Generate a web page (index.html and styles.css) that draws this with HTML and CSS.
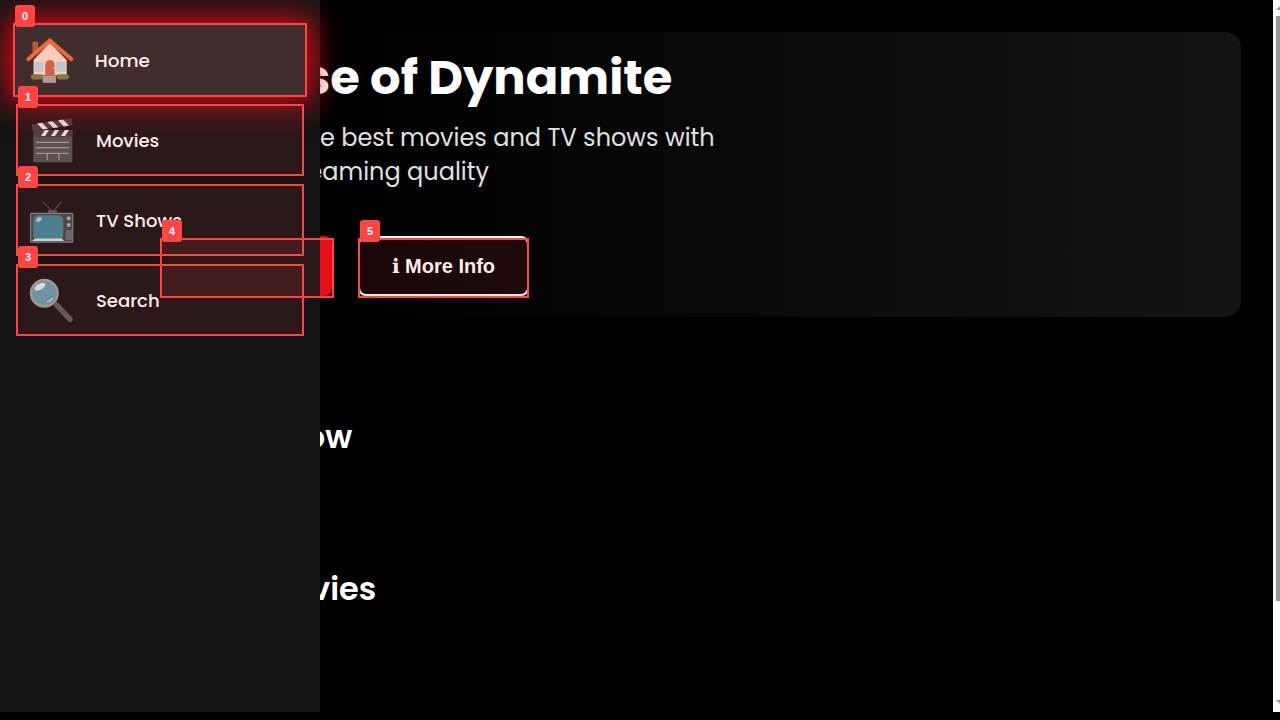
FILE: index.html
```html
<!DOCTYPE html>
<html lang="en">
<head>
    <meta charset="UTF-8">
    <title>Streaming Home</title>
    <link rel="stylesheet" href="styles.css">
</head>
<body>
    <div class="app">
        <div class="page">
            <nav class="sidebar">
                <a class="nav-item nav-item-active">
                    <svg class="nav-icon" viewBox="0 0 48 48">
                        <rect x="7" y="6" width="5.500" height="12" fill="#b5573a"/>
                        <polygon points="8,24 24,7 40.500,24 40.500,39 8,39" fill="#fbdcc8"/>
                        <polyline points="3,23 24,5 45,23" fill="none" stroke="#ee6c34" stroke-width="4" stroke-linecap="round"/>
                        <rect x="9" y="25.700" width="9" height="9.800" fill="#b5d6de"/>
                        <rect x="30" y="25.700" width="9.500" height="9.800" fill="#b5d6de"/>
                        <path d="M19.500 39.400V28.600a4.600 4.600 0 0 1 9.200 0v10.800z" fill="#c8684c"/>
                        <rect x="26.500" y="31" width="2" height="1.500" fill="#f2b632"/>
                        <rect x="5.500" y="38" width="12" height="5" rx="2" fill="#77803f"/>
                        <rect x="30.700" y="38" width="12" height="5" rx="2" fill="#77803f"/>
                        <rect x="17" y="39.400" width="13" height="7" fill="#a9a3a1"/>
                    </svg>
                    <span>Home</span>
                </a>
                <a class="nav-item">
                    <svg class="nav-icon" viewBox="0 0 48 48">
                        <rect x="5.300" y="20" width="39" height="26.300" fill="#4c5252"/>
                        <rect x="5.300" y="14" width="39.400" height="6.700" fill="#3a3f40"/>
                        <path d="M13 20l4-6h4l-4 6zM23 20l4-6h4l-4 6zM33 20l4-6h4l-4 6z" fill="#eeeeee"/>
                        <polygon points="3.700,8.300 43.700,2.300 44.700,9 4.700,15" fill="#3a3f40"/>
                        <path d="M9 7.500l6 6 5-.8-6-6zM19.500 6l6 6 5-.8-6-6zM30 4.400l6 6 5-.8-6-6z" fill="#eeeeee"/>
                        <path d="M8 26.300h33M8 31.700h33M8 37.300h33M19.300 37.300v6.700M31 37.300v6.700" stroke="#9a9f9f" stroke-width="1.200" fill="none"/>
                    </svg>
                    <span>Movies</span>
                </a>
                <a class="nav-item">
                    <svg class="nav-icon" viewBox="0 0 48 48">
                        <path d="M14.700 5.700l10 10 9-10" fill="none" stroke="#4d4d4d" stroke-width="1.200"/>
                        <rect x="20" y="14" width="9" height="3" fill="#4d4d4d"/>
                        <rect x="2" y="16.700" width="43.300" height="30" rx="1.500" fill="#6a8a92"/>
                        <rect x="3.200" y="18" width="41" height="27.500" fill="#3f4448"/>
                        <rect x="5.300" y="19.300" width="30" height="24.700" rx="5" fill="#3c8597"/>
                        <path d="M7 42.500h27l2 2.500H4z" fill="#c8e4e4"/>
                        <ellipse cx="11" cy="23.500" rx="3" ry="2" transform="rotate(-30 11 23.500)" fill="#a6d0da"/>
                        <circle cx="40.700" cy="22.300" r="2" fill="#96b0b8"/>
                        <circle cx="40.700" cy="29" r="2" fill="#96b0b8"/>
                        <rect x="37.700" y="34" width="6.600" height="10" fill="#5e6a70"/>
                    </svg>
                    <span>TV Shows</span>
                </a>
                <a class="nav-item">
                    <svg class="nav-icon" viewBox="0 0 48 48">
                        <path d="M28.700 29l13.300 14.300" stroke="#585a5c" stroke-width="5.500" stroke-linecap="round"/>
                        <circle cx="16.300" cy="17.300" r="13.300" fill="#5d9cb3" stroke="#a09c9a" stroke-width="2.500"/>
                        <ellipse cx="12" cy="10.700" rx="6" ry="3" transform="rotate(-30 12 10.700)" fill="#d5e8ee"/>
                        <path d="M19 26a11 11 0 0 0 6-4" fill="none" stroke="#a9d2e0" stroke-width="1.500"/>
                    </svg>
                    <span>Search</span>
                </a>
            </nav>

            <main class="content">
                <section class="hero">
                    <h1>A House of Dynamite</h1>
                    <p>Experience the best movies and TV shows with<br>premium streaming quality</p>
                    <div class="hero-actions">
                        <button class="btn btn-play">▶ Play</button>
                        <button class="btn btn-info"><span class="btn-glyph">ℹ</span> More Info</button>
                    </div>
                </section>
                <section class="row row-first">
                    <h2>Trending Now</h2>
                </section>
                <section class="row">
                    <h2>Popular Movies</h2>
                </section>
            </main>

            <!-- focus overlay -->
            <div class="mark mark-0"><b>0</b></div>
            <div class="mark mark-1"><b>1</b></div>
            <div class="mark mark-2"><b>2</b></div>
            <div class="mark mark-3"><b>3</b></div>
            <div class="mark mark-4"><b>4</b></div>
            <div class="mark mark-5"><b>5</b></div>
        </div>
        <div class="scrollbar">
            <div class="scroll-up"></div>
            <div class="scroll-thumb"></div>
            <div class="scroll-down"></div>
        </div>
    </div>
</body>
</html>
```

FILE: styles.css
```css
* {
    box-sizing: border-box;
}
html, body {
    margin: 0;
    height: 100%;
    background-color: black;
    overflow: hidden;
}
body {
    font-family: Poppins, Inter, "Liberation Sans", sans-serif;
    color: white;
}
.app {
    display: flex;
    height: 712px;
}
.page {
    position: relative;
    flex: 1;
    overflow: hidden;
}

/* sidebar */
.sidebar {
    position: absolute;
    top: 0;
    left: 0;
    z-index: 2;
    display: flex;
    flex-direction: column;
    gap: 8px;
    width: 320px;
    height: 100%;
    padding: 24px 16px;
    background-color: #141414;
}
.nav-item {
    display: flex;
    align-items: center;
    gap: 20px;
    height: 72px;
    padding: 0 12px;
    font-size: 18px;
    font-weight: 500;
    color: white;
}
.nav-item-active {
    background-color: rgba(255, 255, 255, 0.1);
    box-shadow: 0 0 30px 5px #e50914;
    transform: scale(1.02);
}
.nav-icon {
    width: 48px;
    height: 48px;
}

/* main */
.content {
    padding: 32px 32px 0 96px;
}
.hero {
    height: 285px;
    padding: 17px 64px;
    border-radius: 16px;
    background: linear-gradient(90deg, black 20%, #141414);
}
.hero h1 {
    margin: 0 0 14px;
    font-size: 48px;
    font-weight: 700;
    line-height: 58px;
}
.hero p {
    margin: 0 0 47px;
    font-size: 24px;
    font-weight: 400;
    line-height: 34px;
    color: #e0e0e0;
}
.hero-actions {
    display: flex;
    gap: 26px;
}
.btn {
    height: 60px;
    border-radius: 8px;
    font-family: "Liberation Sans", Arial, sans-serif;
    font-size: 20px;
    font-weight: 700;
    color: white;
}
.btn-glyph {
    font-family: "DejaVu Sans", sans-serif;
}
.btn-play {
    width: 172px;
    border: none;
    background-color: #e50914;
}
.btn-info {
    width: 171px;
    border: 2px solid white;
    background-color: transparent;
}
.row {
    margin-top: 104px;
    padding-left: 32px;
}
.row-first {
    margin-top: 96px;
}
.row h2 {
    margin: 0;
    font-size: 32px;
    font-weight: 600;
    line-height: 48px;
}

/* focus overlay */
.mark {
    position: absolute;
    z-index: 3;
    border: 2px solid #ff4444;
    background-color: rgba(255, 68, 68, 0.1);
}
.mark b {
    position: absolute;
    top: -20px;
    left: 0;
    width: 20px;
    height: 22px;
    border-radius: 3px;
    background-color: #ff4444;
    font-family: "Liberation Sans", Arial, sans-serif;
    font-size: 11px;
    line-height: 22px;
    text-align: center;
    color: white;
}
.mark-0 { left: 13px; top: 23px; width: 294px; height: 74px; }
.mark-1 { left: 16px; top: 104px; width: 288px; height: 72px; }
.mark-2 { left: 16px; top: 184px; width: 288px; height: 72px; }
.mark-3 { left: 16px; top: 264px; width: 288px; height: 72px; }
.mark-4 { left: 160px; top: 238px; width: 174px; height: 60px; }
.mark-5 { left: 358px; top: 238px; width: 171px; height: 60px; }

/* scrollbar */
.scrollbar {
    display: flex;
    flex-direction: column;
    width: 7px;
    padding-left: 3px;
    background-color: white;
}
.scroll-up {
    height: 0;
    margin: 6px 0 6px;
    border-left: 4px solid transparent;
    border-bottom: 4px solid #999;
}
.scroll-thumb {
    height: 585px;
    background-color: #999;
}
.scroll-down {
    height: 0;
    margin-top: auto;
    margin-bottom: 8px;
    border-left: 4px solid transparent;
    border-top: 4px solid #999;
}
```
